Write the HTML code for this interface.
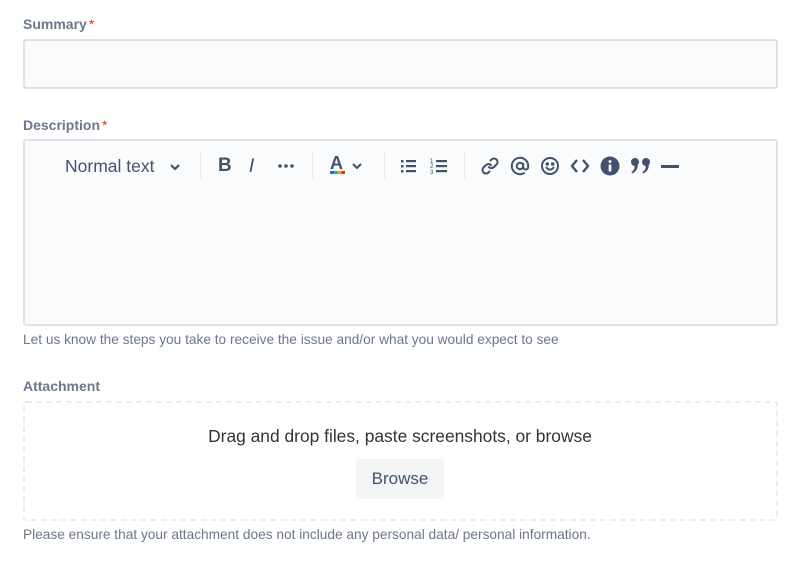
<!DOCTYPE html><html><head><style>
body{margin:0;background:#fff;font-family:"Liberation Sans",sans-serif;width:804px;height:562px;position:relative;overflow:hidden}
.a{position:absolute}
.lbl{font-size:14px;font-weight:bold;color:#6b778c}
.lbl span{color:#de350b;font-weight:normal;margin-left:2px}
.box{background:#fafbfc;border:2px solid #dfe1e6;border-radius:3px;box-sizing:border-box}
.help{font-size:13.7px;color:#6b778c;white-space:nowrap}
.sep{width:1px;height:28px;background:#ebecf0;top:152px}
svg{position:absolute}
</style></head><body>
<div class="a lbl" style="left:23px;top:16px">Summary<span>*</span></div>
<div class="a box" style="left:23px;top:39px;width:755px;height:50px"></div>
<div class="a lbl" style="left:23px;top:117px">Description<span>*</span></div>
<div class="a box" style="left:23px;top:139px;width:755px;height:187px"></div>
<div class="a" style="left:65px;top:156px;font-size:17.5px;color:#42526e">Normal text</div>
<svg style="left:168px;top:160px" width="14" height="14" viewBox="0 0 14 14"><path d="M3 5l4 4 4-4" stroke="#42526e" stroke-width="2.2" fill="none"/></svg>
<div class="a sep" style="left:200px"></div>
<div class="a" style="left:218px;top:155px;font-size:19px;font-weight:bold;color:#42526e">B</div>
<div class="a" style="left:249px;top:155px;font-size:19px;font-style:italic;font-family:'DejaVu Sans';color:#42526e">I</div>
<svg style="left:277px;top:163px" width="18" height="6"><circle cx="3" cy="3" r="1.8" fill="#42526e"/><circle cx="9" cy="3" r="1.8" fill="#42526e"/><circle cx="15" cy="3" r="1.8" fill="#42526e"/></svg>
<div class="a sep" style="left:312px"></div>
<div class="a" style="left:330px;top:153px;font-size:18px;font-weight:bold;color:#42526e">A</div>
<div class="a" style="left:330px;top:171px;width:15px;height:3px;background:linear-gradient(90deg,#6554c0 25%,#00b8d9 25% 50%,#ff991f 50% 75%,#de350b 75%)"></div>
<svg style="left:351px;top:160px" width="12" height="12" viewBox="0 0 12 12"><path d="M2 4l4 4 4-4" stroke="#42526e" stroke-width="2" fill="none"/></svg>
<div class="a sep" style="left:384px"></div>
<svg style="left:400px;top:158px" width="18" height="16" fill="#42526e"><rect x="1" y="2" width="2.5" height="2.5"/><rect x="1" y="7" width="2.5" height="2.5"/><rect x="1" y="12" width="2.5" height="2.5"/><rect x="6" y="2" width="10" height="2.2"/><rect x="6" y="7" width="10" height="2.2"/><rect x="6" y="12" width="10" height="2.2"/></svg>
<svg style="left:430px;top:157px" width="18" height="18" fill="#42526e"><text x="0" y="6" font-size="6" font-family="Liberation Sans">1</text><text x="0" y="11" font-size="6" font-family="Liberation Sans">2</text><text x="0" y="17" font-size="6" font-family="Liberation Sans">3</text><rect x="6" y="3" width="11" height="2.2"/><rect x="6" y="8" width="11" height="2.2"/><rect x="6" y="13" width="11" height="2.2"/></svg>
<div class="a sep" style="left:464px"></div>
<svg style="left:481px;top:157px" width="18" height="18" viewBox="0 0 18 18" fill="none" stroke="#42526e" stroke-width="2" stroke-linecap="round"><path d="M8 10a3.5 3.5 0 0 0 5 0l2.5-2.5a3.5 3.5 0 0 0-5-5L9.5 3.5"/><path d="M10 8a3.5 3.5 0 0 0-5 0L2.5 10.5a3.5 3.5 0 0 0 5 5L8.5 14.5"/></svg>
<svg style="left:510px;top:156px" width="20" height="20" viewBox="0 0 20 20" fill="none" stroke="#42526e" stroke-width="2"><circle cx="10" cy="10" r="3.2"/><path d="M13.2 7v4a2.5 2.5 0 0 0 5 0v-1a8.2 8.2 0 1 0-3.5 6.7"/></svg>
<svg style="left:540px;top:156px" width="20" height="20" viewBox="0 0 20 20" fill="none" stroke="#42526e" stroke-width="2"><circle cx="10" cy="10" r="8"/><path d="M6.5 11.5a4 4 0 0 0 7 0" stroke-linecap="round"/><circle cx="7.3" cy="8" r=".8" fill="#42526e"/><circle cx="12.7" cy="8" r=".8" fill="#42526e"/></svg>
<svg style="left:570px;top:157px" width="20" height="18" viewBox="0 0 20 18" fill="none" stroke="#42526e" stroke-width="2.4"><path d="M7 3L2 9l5 6M13 3l5 6-5 6"/></svg>
<svg style="left:600px;top:156px" width="20" height="20" viewBox="0 0 20 20"><circle cx="10" cy="10" r="9.5" fill="#42526e"/><rect x="8.7" y="8.5" width="2.6" height="7" fill="#fff"/><circle cx="10" cy="5.5" r="1.5" fill="#fff"/></svg>
<svg style="left:630px;top:157px" width="22" height="18" viewBox="0 0 22 18" fill="#42526e"><circle cx="5" cy="5" r="4"/><path d="M7.5 7C8.5 11 6 15 2 16.5L1.5 15C4 13.5 5 11 4.5 8.5Z"/><circle cx="16" cy="5" r="4"/><path d="M18.5 7C19.5 11 17 15 13 16.5L12.5 15C15 13.5 16 11 15.5 8.5Z"/></svg>
<div class="a" style="left:661px;top:165px;width:18px;height:2.5px;background:#42526e"></div>
<div class="a help" style="left:23px;top:332px">Let us know the steps you take to receive the issue and/or what you would expect to see</div>
<div class="a lbl" style="left:23px;top:378px">Attachment</div>
<div class="a" style="left:23px;top:401px;width:755px;height:120px;border:2px dashed #ebecf0;box-sizing:border-box;border-radius:3px"></div>
<div class="a" style="left:0;width:800px;text-align:center;top:426px;font-size:17.4px;color:#333">Drag and drop files, paste screenshots, or browse</div>
<div class="a" style="left:356px;top:459px;width:88px;height:40px;background:#f4f5f7;border-radius:3px;text-align:center;line-height:40px;font-size:17px;color:#42526e">Browse</div>
<div class="a help" style="left:23px;top:527px">Please ensure that your attachment does not include any personal data/ personal information.</div>
</body></html>
